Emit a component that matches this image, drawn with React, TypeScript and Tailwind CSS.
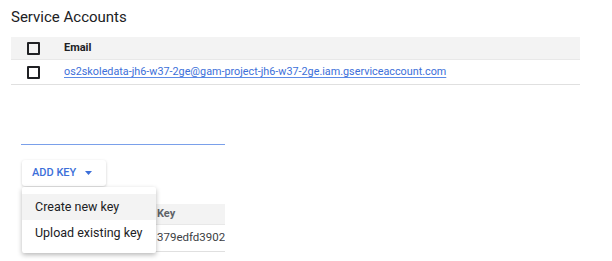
const Checkbox = () => (
  <div className="w-[13px] h-[13px] border-2 border-[#202124] rounded-[1px]" />
);

export default function App() {
  return (
    <div className="w-[612px] h-[261px] bg-white text-[#202124] font-['Roboto',sans-serif] overflow-hidden">
      <div className="pl-[11px] pt-[6px]">
        <h1 className="text-[15px] leading-[22px] font-normal">Service Accounts</h1>

        {/* Service accounts table */}
        <div className="mt-[9px] w-[569px]">
          <div className="flex items-center h-[23px] bg-[#f3f3f3] border-b border-[#e8e8e8]">
            <div className="w-[53px] pl-[16px]">
              <Checkbox />
            </div>
            <span className="text-[11px] font-bold">Email</span>
          </div>
          <div className="flex items-center h-[25px] border-b border-[#e0e0e0]">
            <div className="w-[53px] pl-[16px]">
              <Checkbox />
            </div>
            <a className="text-[10.8px] text-[#3c6fd9] underline decoration-[#5b8ae6] underline-offset-2">
              os2skoledata-jh6-w37-2ge@gam-project-jh6-w37-2ge.iam.gserviceaccount.com
            </a>
          </div>
        </div>
      </div>

      {/* Service account detail, cropped */}
      <div className="ml-[21px] w-[204px] mt-[59px]">
        <div className="h-px bg-[#7aa0ea]" />

        <div className="relative pt-[15px]">
          <button className="ml-px flex items-center gap-[9px] h-[26px] pl-[10px] pr-[14px] bg-white rounded-[3px] shadow-[0_1px_3px_rgba(0,0,0,0.2)] text-[11px] font-medium text-[#3c6fd9]">
            ADD KEY
            <svg width="7" height="4" viewBox="0 0 7 4">
              <path d="M0 0h7L3.5 4z" fill="#3c6fd9" />
            </svg>
          </button>

          {/* Keys table behind the menu */}
          <div className="mt-[18px] ml-px">
            <div className="flex items-center h-[21px] bg-[#f3f3f3] border-b border-[#e8e8e8] pl-[135px]">
              <span className="text-[11px] font-bold text-[#5f6368]">Key</span>
            </div>
            <div className="flex items-center h-[27px] border-b border-[#e0e0e0] pl-[135px] overflow-hidden whitespace-nowrap">
              <span className="text-[11.5px] text-[#3c4043]">379edfd3902e1b4a</span>
            </div>
          </div>

          {/* Dropdown menu */}
          <div className="absolute left-px top-[42px] w-[134px] py-[7px] bg-white shadow-[0_2px_5px_rgba(0,0,0,0.28)] rounded-[2px]">
            <div className="h-[26px] flex items-center pl-[13px] bg-[#f3f3f3] text-[12.5px]">Create new key</div>
            <div className="h-[26px] flex items-center pl-[13px] text-[12.5px]">Upload existing key</div>
          </div>
        </div>
      </div>
    </div>
  );
}
